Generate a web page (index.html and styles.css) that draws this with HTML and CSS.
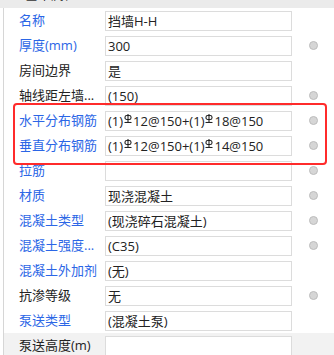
FILE: index.html
```html
<!DOCTYPE html>
<html>
<head>
<meta charset="utf-8">
<link rel="stylesheet" href="styles.css">
</head>
<body>
<div class="head"><span class="head-text">基本属性</span></div>
<div class="panel">
  <div class="row"><span class="lbl blue">名称</span><span class="val">挡墙H-H</span><span class="dot-cell"></span></div>
  <div class="row"><span class="lbl blue">厚度(mm)</span><span class="val">300</span><span class="dot-cell"><i class="dot"></i></span></div>
  <div class="row"><span class="lbl">房间边界</span><span class="val">是</span><span class="dot-cell"></span></div>
  <div class="row"><span class="lbl">轴线距左墙...</span><span class="val">(150)</span><span class="dot-cell"><i class="dot"></i></span></div>
  <div class="row"><span class="lbl blue">水平分布钢筋</span><span class="val">(1)<svg class="bar" viewBox="0 0 8 9"><rect x="1" y="1.5" width="6" height="4" rx="1.8"/><line x1="4" y1="0" x2="4" y2="8.5"/><line x1="0.5" y1="8.5" x2="7.5" y2="8.5"/></svg>12@150+(1)<svg class="bar" viewBox="0 0 8 9"><rect x="1" y="1.5" width="6" height="4" rx="1.8"/><line x1="4" y1="0" x2="4" y2="8.5"/><line x1="0.5" y1="8.5" x2="7.5" y2="8.5"/></svg>18@150</span><span class="dot-cell"><i class="dot"></i></span></div>
  <div class="row"><span class="lbl blue">垂直分布钢筋</span><span class="val">(1)<svg class="bar" viewBox="0 0 8 9"><rect x="1" y="1.5" width="6" height="4" rx="1.8"/><line x1="4" y1="0" x2="4" y2="8.5"/><line x1="0.5" y1="8.5" x2="7.5" y2="8.5"/></svg>12@150+(1)<svg class="bar" viewBox="0 0 8 9"><rect x="1" y="1.5" width="6" height="4" rx="1.8"/><line x1="4" y1="0" x2="4" y2="8.5"/><line x1="0.5" y1="8.5" x2="7.5" y2="8.5"/></svg>14@150</span><span class="dot-cell"><i class="dot"></i></span></div>
  <div class="row"><span class="lbl blue">拉筋</span><span class="val"></span><span class="dot-cell"><i class="dot"></i></span></div>
  <div class="row"><span class="lbl blue">材质</span><span class="val">现浇混凝土</span><span class="dot-cell"><i class="dot"></i></span></div>
  <div class="row"><span class="lbl blue">混凝土类型</span><span class="val">(现浇碎石混凝土)</span><span class="dot-cell"><i class="dot"></i></span></div>
  <div class="row"><span class="lbl blue">混凝土强度...</span><span class="val">(C35)</span><span class="dot-cell"><i class="dot"></i></span></div>
  <div class="row"><span class="lbl blue">混凝土外加剂</span><span class="val">(无)</span><span class="dot-cell"></span></div>
  <div class="row"><span class="lbl">抗渗等级</span><span class="val">无</span><span class="dot-cell"><i class="dot"></i></span></div>
  <div class="row"><span class="lbl blue">泵送类型</span><span class="val">(混凝土泵)</span><span class="dot-cell"></span></div>
  <div class="row shaded"><span class="lbl">泵送高度(m)</span><span class="val"></span><span class="dot-cell"></span></div>
  <div class="highlight"></div>
</div>
</body>
</html>
```
FILE: styles.css
```css
html, body {
  margin: 0;
  padding: 0;
  background: #fff;
  overflow: hidden;
}
body {
  width: 334px;
  height: 355px;
  font-family: "Open Sans", "Noto Sans CJK SC", sans-serif;
  font-size: 13px;
  color: #222;
}
.head {
  height: 8px;
  background: #ebebeb;
  overflow: hidden;
  position: relative;
}
.head-text {
  display: block;
  padding-left: 25px;
  margin-top: -15px;
  line-height: 18px;
  color: #333;
}
.panel {
  position: relative;
  margin-left: 3px;
  border-left: 1px solid #d6d6d6;
}
.row {
  display: flex;
  align-items: center;
  height: 25px;
}
.row.shaded {
  background: #f2f2f2;
}
.lbl {
  width: 86px;
  padding-left: 15px;
  white-space: nowrap;
  overflow: hidden;
  line-height: 25px;
}
.lbl.blue {
  color: #2b66e6;
}
.val {
  box-sizing: border-box;
  width: 187px;
  height: 20px;
  border: 1px solid #dcdcdc;
  background: #fff;
  padding-left: 2px;
  line-height: 18px;
  white-space: nowrap;
  overflow: hidden;
  display: flex;
  align-items: center;
}
.dot-cell {
  flex: 1;
  display: flex;
  justify-content: center;
  align-items: center;
}
.dot {
  display: block;
  width: 7px;
  height: 7px;
  border-radius: 50%;
  background: #d6d6d6;
  border: 1px solid #bdbdbd;
}
.bar {
  width: 8px;
  height: 9px;
  margin: 0 1px 4px 1px;
  fill: none;
  stroke: #222;
  stroke-width: 1.1;
}
.highlight {
  position: absolute;
  left: 9px;
  top: 95px;
  width: 310px;
  height: 58px;
  border: 2px solid #ff2b2b;
  border-radius: 4px;
}
```
